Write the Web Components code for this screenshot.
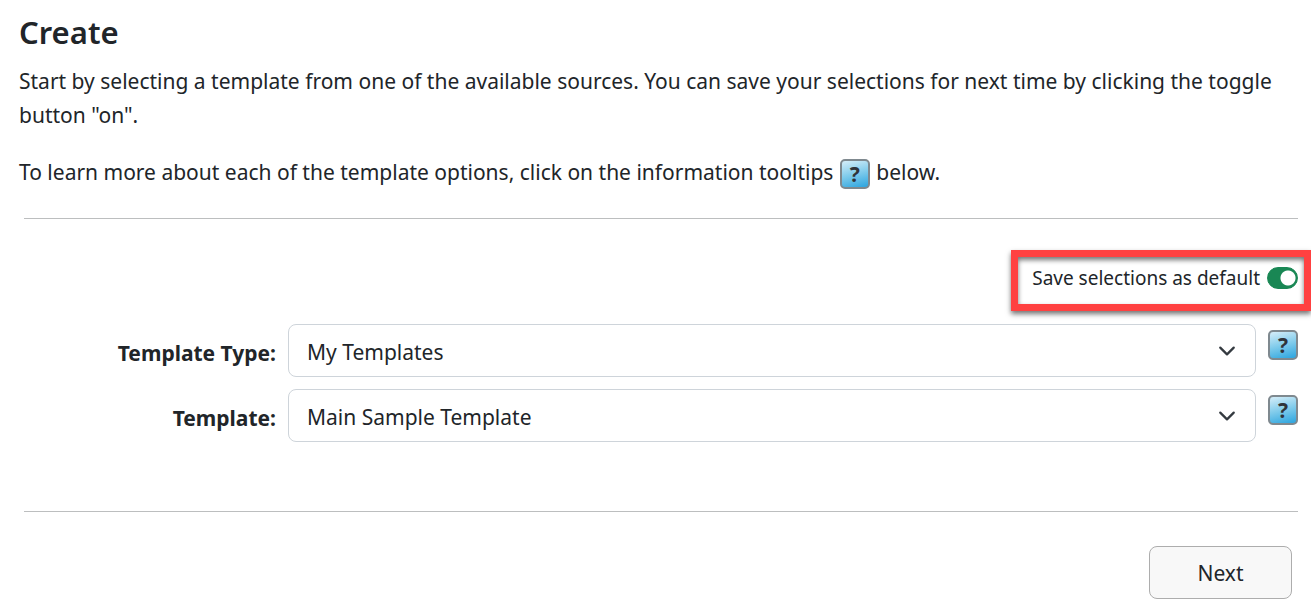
<!DOCTYPE html>
<html lang="en">
<head>
<meta charset="utf-8">
<title>Create</title>
<style>
    body {
        margin: 0;
        background: #fff;
        color: #212529;
        font-family: "Segoe UI", "Noto Sans", sans-serif;
        font-size: 21px;
        line-height: 34px;
    }
</style>
</head>
<body>
<create-page></create-page>

<script>
function createTemplate(html) {
    const template = document.createElement("template");
    template.innerHTML = html;
    return template;
}

function attach(element, template) {
    const root = element.attachShadow({ mode: "open" });
    root.appendChild(template.content.cloneNode(true));
    return root;
}

const tooltipTemplate = createTemplate(`
    <style>
        :host {
            display: inline-block;
            vertical-align: middle;
        }

        button {
            display: flex;
            align-items: center;
            justify-content: center;
            box-sizing: border-box;
            width: 30px;
            height: 30px;
            padding: 0;
            border: 2px solid #7f898f;
            border-radius: 5px;
            background: linear-gradient(165deg, #cdeaf7 5%, #7fcbeb 50%, #33a8e0 95%);
            color: #30343a;
            font: bold 21px/26px "Noto Sans", sans-serif;
            cursor: pointer;
        }
    </style>
    <button type="button" aria-label="More information">?</button>
`);

class InfoTooltip extends HTMLElement {
    constructor() {
        super();
        attach(this, tooltipTemplate);
    }
}

const toggleTemplate = createTemplate(`
    <style>
        :host {
            display: block;
        }

        label {
            display: flex;
            align-items: center;
            gap: 7px;
            font-size: 19px;
            line-height: 28px;
            cursor: pointer;
        }

        input {
            appearance: none;
            box-sizing: border-box;
            width: 31px;
            height: 22px;
            margin: 0;
            border: 1px solid #adb5bd;
            border-radius: 11px;
            background: radial-gradient(circle at 10px 50%, #adb5bd 7px, transparent 8px);
            cursor: pointer;
        }

        input:checked {
            border-color: #198754;
            background: radial-gradient(circle at 20px 50%, #fff 7px, #198754 8px);
        }
    </style>
    <label><slot></slot><input type="checkbox" role="switch" checked></label>
`);

class ToggleSwitch extends HTMLElement {
    constructor() {
        super();
        this._input = attach(this, toggleTemplate).querySelector("input");
    }

    get checked() {
        return this._input.checked;
    }
}

const calloutTemplate = createTemplate(`
    <style>
        :host {
            display: block;
            box-sizing: border-box;
            height: 61px;
            padding: 7px 6px 0 14px;
            border: 7px solid #ff4141;
            box-shadow: 0 3px 5px rgba(0, 0, 0, 0.55), inset 0 3px 5px rgba(0, 0, 0, 0.55);
        }
    </style>
    <slot></slot>
`);

class CalloutBox extends HTMLElement {
    constructor() {
        super();
        attach(this, calloutTemplate);
    }
}

const selectTemplate = createTemplate(`
    <style>
        :host {
            display: grid;
            grid-template-columns: 276px 1fr 30px;
            align-items: start;
            column-gap: 12px;
        }

        label {
            padding-top: 12px;
            font-weight: bold;
            text-align: right;
        }

        .box {
            display: grid;
            align-items: center;
        }

        select,
        svg {
            grid-area: 1 / 1;
        }

        select {
            appearance: none;
            box-sizing: border-box;
            width: 100%;
            height: 53px;
            padding: 2px 60px 0 18px;
            border: 1px solid #ced4da;
            border-radius: 8px;
            background: #fff;
            color: inherit;
            font: inherit;
        }

        svg {
            justify-self: end;
            width: 18px;
            height: 18px;
            margin-right: 20px;
            pointer-events: none;
        }

        info-tooltip {
            margin-top: 6px;
        }
    </style>
    <label for="select"></label>
    <div class="box">
        <select id="select"></select>
        <svg viewBox="0 0 16 16" fill="none" stroke="#343a40" stroke-width="2" stroke-linecap="round" stroke-linejoin="round">
            <path d="m2 5 6 6 6-6"/>
        </svg>
    </div>
    <info-tooltip></info-tooltip>
`);

class SelectRow extends HTMLElement {
    constructor() {
        super();
        attach(this, selectTemplate);
    }

    connectedCallback() {
        this.shadowRoot.querySelector("label").textContent = this.getAttribute("label");
        const select = this.shadowRoot.querySelector("select");
        select.replaceChildren(new Option(this.getAttribute("value")));
    }
}

const pageTemplate = createTemplate(`
    <style>
        :host {
            display: block;
            padding-top: 13px;
        }

        h1 {
            margin: 0;
            padding: 0 10px 13px 19px;
            font-size: 31px;
            font-weight: 600;
            line-height: 38px;
        }

        p {
            margin: 0 0 23px;
            padding: 0 10px 0 19px;
        }

        p + p {
            margin-bottom: 29px;
        }

        p info-tooltip {
            margin: 0 1px;
        }

        hr {
            height: 1px;
            margin: 0 13px 0 24px;
            border: 0;
            background: #bcbebf;
        }

        .default {
            display: flex;
            justify-content: flex-end;
            padding: 31px 0 13px;
        }

        .rows {
            display: grid;
            gap: 12px;
            padding: 0 13px 69px 0;
        }

        .actions {
            display: flex;
            justify-content: flex-end;
            padding: 34px 19px 6px;
        }

        .actions button {
            width: 143px;
            height: 53px;
            border: 1px solid #adadad;
            border-radius: 8px;
            background: #f8f8f8;
            color: inherit;
            font: inherit;
            cursor: pointer;
        }
    </style>
    <h1>Create</h1>
    <p>Start by selecting a template from one of the available sources. You can save your selections for next time by clicking the toggle button "on".</p>
    <p>To learn more about each of the template options, click on the information tooltips <info-tooltip></info-tooltip> below.</p>
    <hr>
    <div class="default">
        <callout-box>
            <toggle-switch>Save selections as default</toggle-switch>
        </callout-box>
    </div>
    <div class="rows">
        <select-row label="Template Type:" value="My Templates"></select-row>
        <select-row label="Template:" value="Main Sample Template"></select-row>
    </div>
    <hr>
    <div class="actions">
        <button type="button">Next</button>
    </div>
`);

class CreatePage extends HTMLElement {
    constructor() {
        super();
        attach(this, pageTemplate);
    }
}

customElements.define("info-tooltip", InfoTooltip);
customElements.define("toggle-switch", ToggleSwitch);
customElements.define("callout-box", CalloutBox);
customElements.define("select-row", SelectRow);
customElements.define("create-page", CreatePage);
</script>
</body>
</html>
